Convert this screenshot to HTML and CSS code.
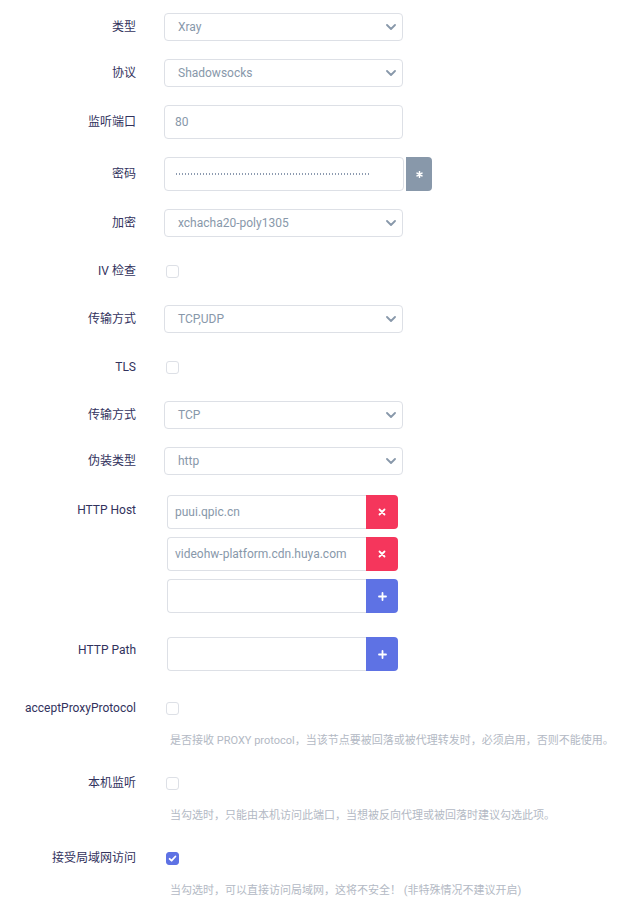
FILE: index.html
```html
<!DOCTYPE html>
<html lang="zh-CN">
<head>
<meta charset="utf-8">
<title>入站设置</title>
<link rel="stylesheet" href="styles.css">
</head>
<body>
<div class="form">
  <div class="item">
    <div class="label">类型</div>
    <div class="select"><span class="value">Xray</span><svg class="chev" width="10" height="6" viewBox="0 0 10 6"><path d="M1 1l4 4 4-4"/></svg></div>
  </div>
  <div class="item">
    <div class="label">协议</div>
    <div class="select"><span class="value">Shadowsocks</span><svg class="chev" width="10" height="6" viewBox="0 0 10 6"><path d="M1 1l4 4 4-4"/></svg></div>
  </div>
  <div class="item">
    <div class="label">监听端口</div>
    <div class="input"><span class="value">80</span></div>
  </div>
  <div class="item">
    <div class="label">密码</div>
    <div class="pw-group">
      <div class="input pw"><span class="dots"></span></div>
      <div class="btn btn-gray"><svg width="7" height="7" viewBox="0 0 8 8"><path d="M4 0.8v6.4M1.2 2.4l5.6 3.2M6.8 2.4l-5.6 3.2"/></svg></div>
    </div>
  </div>
  <div class="item">
    <div class="label">加密</div>
    <div class="select"><span class="value">xchacha20-poly1305</span><svg class="chev" width="10" height="6" viewBox="0 0 10 6"><path d="M1 1l4 4 4-4"/></svg></div>
  </div>
  <div class="item check">
    <div class="label">IV 检查</div>
    <div class="checkbox"></div>
  </div>
  <div class="item">
    <div class="label">传输方式</div>
    <div class="select"><span class="value">TCP,UDP</span><svg class="chev" width="10" height="6" viewBox="0 0 10 6"><path d="M1 1l4 4 4-4"/></svg></div>
  </div>
  <div class="item check">
    <div class="label">TLS</div>
    <div class="checkbox"></div>
  </div>
  <div class="item">
    <div class="label">传输方式</div>
    <div class="select"><span class="value">TCP</span><svg class="chev" width="10" height="6" viewBox="0 0 10 6"><path d="M1 1l4 4 4-4"/></svg></div>
  </div>
  <div class="item">
    <div class="label">伪装类型</div>
    <div class="select"><span class="value">http</span><svg class="chev" width="10" height="6" viewBox="0 0 10 6"><path d="M1 1l4 4 4-4"/></svg></div>
  </div>
  <div class="item top host">
    <div class="label">HTTP Host</div>
    <div class="list">
      <div class="group">
        <div class="ginput"><span class="value">puui.qpic.cn</span></div>
        <div class="gbtn btn-red"><svg width="8" height="8" viewBox="0 0 8 8"><path d="M1.5 1.5l5 5M6.5 1.5l-5 5"/></svg></div>
      </div>
      <div class="group">
        <div class="ginput"><span class="value">videohw-platform.cdn.huya.com</span></div>
        <div class="gbtn btn-red"><svg width="8" height="8" viewBox="0 0 8 8"><path d="M1.5 1.5l5 5M6.5 1.5l-5 5"/></svg></div>
      </div>
      <div class="group">
        <div class="ginput"></div>
        <div class="gbtn btn-blue"><svg width="9" height="9" viewBox="0 0 9 9"><path d="M4.5 1v7M1 4.5h7"/></svg></div>
      </div>
    </div>
  </div>
  <div class="item top path">
    <div class="label">HTTP Path</div>
    <div class="list">
      <div class="group">
        <div class="ginput"></div>
        <div class="gbtn btn-blue"><svg width="9" height="9" viewBox="0 0 9 9"><path d="M4.5 1v7M1 4.5h7"/></svg></div>
      </div>
    </div>
  </div>
  <div class="item-help">
    <div class="label">acceptProxyProtocol</div>
    <div class="cb-cell"><div class="checkbox"></div></div>
    <div class="help">是否接收 PROXY protocol，当该节点要被回落或被代理转发时，必须启用，否则不能使用。</div>
  </div>
  <div class="item-help">
    <div class="label">本机监听</div>
    <div class="cb-cell"><div class="checkbox"></div></div>
    <div class="help">当勾选时，只能由本机访问此端口，当想被反向代理或被回落时建议勾选此项。</div>
  </div>
  <div class="item-help">
    <div class="label">接受局域网访问</div>
    <div class="cb-cell"><div class="checkbox checked"><svg width="9" height="9" viewBox="0 0 9 9"><path d="M1.6 4.8l2 1.9 3.8-4.2"/></svg></div></div>
    <div class="help">当勾选时，可以直接访问局域网，这将不安全！ (非特殊情况不建议开启)</div>
  </div>
</div>
</body>
</html>
```
FILE: styles.css
```css
html, body {
  margin: 0;
  padding: 0;
  background: #ffffff;
}
body {
  font-family: Roboto, "Noto Sans CJK SC", sans-serif;
  -webkit-font-smoothing: antialiased;
}
.form {
  padding-top: 13px;
}
.item {
  display: flex;
  align-items: center;
  margin-bottom: 18px;
}
.label {
  flex: none;
  width: 136px;
  margin-right: 28px;
  text-align: right;
  font-size: 12px;
  line-height: 17px;
  color: #32325d;
}
.value {
  font-size: 12px;
  color: #8898aa;
  white-space: nowrap;
}
.select {
  box-sizing: border-box;
  width: 239px;
  height: 28px;
  border: 1px solid #dde0e6;
  border-radius: 4px;
  display: flex;
  align-items: center;
  justify-content: space-between;
  padding: 0 6px 0 13px;
}
.chev path {
  fill: none;
  stroke: #8898aa;
  stroke-width: 1.8;
  stroke-linecap: round;
  stroke-linejoin: round;
}
.input {
  box-sizing: border-box;
  width: 239px;
  height: 34px;
  border: 1px solid #dde0e6;
  border-radius: 4px;
  display: flex;
  align-items: center;
  padding-left: 10px;
}
.pw-group {
  display: flex;
  align-items: center;
}
.input.pw {
  width: 240px;
  padding-left: 11px;
}
.dots {
  display: block;
  width: 195px;
  height: 2px;
  background-image: repeating-linear-gradient(90deg, #8d9bb0 0, #8d9bb0 1.5px, transparent 1.5px, transparent 3px);
}
.btn {
  box-sizing: border-box;
  width: 26px;
  height: 34px;
  margin-left: 2px;
  border-radius: 0 4px 4px 0;
  display: flex;
  align-items: center;
  justify-content: center;
}
.btn-gray {
  background: #8898aa;
}
.btn svg path,
.gbtn svg path {
  fill: none;
  stroke: #ffffff;
  stroke-width: 1.8;
  stroke-linecap: round;
}
.item.check {
  height: 32px;
}
.checkbox {
  box-sizing: border-box;
  width: 13px;
  height: 13px;
  margin-left: 2px;
  border: 1px solid #dde0e6;
  border-radius: 3px;
  background: #ffffff;
  display: flex;
  align-items: center;
  justify-content: center;
}
.checkbox.checked {
  background: #5e72e4;
  border-color: #5e72e4;
}
.checkbox.checked path {
  fill: none;
  stroke: #ffffff;
  stroke-width: 1.8;
  stroke-linecap: round;
  stroke-linejoin: round;
}
.item.top {
  align-items: flex-start;
}
.item.host .label {
  padding-top: 9px;
}
.item.path .label {
  padding-top: 5px;
}
.item.host {
  margin-bottom: 24px;
}
.item.host .list {
  margin-top: 2px;
}
.item.path {
  margin-bottom: 22px;
}
.list {
  margin-left: 3px;
  display: flex;
  flex-direction: column;
  gap: 8px;
}
.group {
  display: flex;
}
.ginput {
  box-sizing: border-box;
  width: 199px;
  height: 34px;
  border: 1px solid #dde0e6;
  border-right: none;
  border-radius: 4px 0 0 4px;
  display: flex;
  align-items: center;
  padding-left: 7px;
}
.gbtn {
  width: 32px;
  height: 34px;
  border-radius: 0 4px 4px 0;
  display: flex;
  align-items: center;
  justify-content: center;
}
.btn-red {
  background: #f5365c;
}
.btn-blue {
  background: #5e72e4;
}
.item-help {
  display: grid;
  grid-template-columns: 136px 1fr;
  column-gap: 28px;
  margin-bottom: 19.5px;
}
.item-help .label {
  margin-right: 0;
  align-self: center;
}
.cb-cell {
  height: 31.5px;
  display: flex;
  align-items: center;
}
.help {
  grid-column: 2;
  margin-top: 8px;
  padding-left: 6px;
  font-size: 11px;
  line-height: 16px;
  color: #b3b9c4;
  white-space: nowrap;
}
```
